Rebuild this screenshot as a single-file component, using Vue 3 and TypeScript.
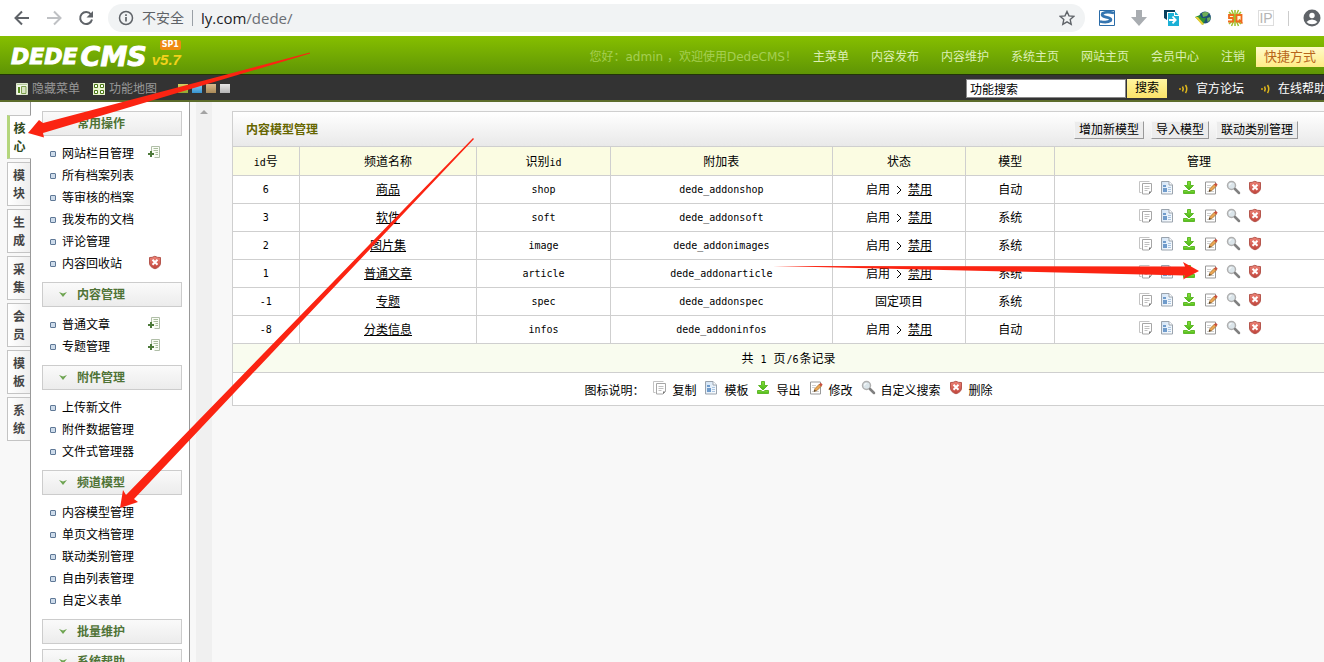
<script setup lang="ts">
import { ref } from 'vue'

type IconName = 'copy' | 'template' | 'export' | 'edit' | 'search' | 'delete'

interface Model {
  id: string
  name: string
  key: string
  table: string
  fixed: boolean
  kind: string
}

interface MenuItem {
  text: string
  extra?: 'add' | 'delete'
}

interface MenuGroup {
  title: string
  items: MenuItem[]
}

const keyword = ref('功能搜索')
const activeTab = ref('核心')

const topLinks = ['主菜单', '内容发布', '内容维护', '系统主页', '网站主页', '会员中心', '注销']
const helpLinks = ['官方论坛', '在线帮助']
const skins = ['green', 'blue', 'tan', 'grey']
const tabs = ['核心', '模块', '生成', '采集', '会员', '模板', '系统']

const groups: MenuGroup[] = [
  {
    title: '常用操作',
    items: [
      { text: '网站栏目管理', extra: 'add' },
      { text: '所有档案列表' },
      { text: '等审核的档案' },
      { text: '我发布的文档' },
      { text: '评论管理' },
      { text: '内容回收站', extra: 'delete' },
    ],
  },
  { title: '内容管理', items: [{ text: '普通文章', extra: 'add' }, { text: '专题管理', extra: 'add' }] },
  { title: '附件管理', items: [{ text: '上传新文件' }, { text: '附件数据管理' }, { text: '文件式管理器' }] },
  {
    title: '频道模型',
    items: [
      { text: '内容模型管理' },
      { text: '单页文档管理' },
      { text: '联动类别管理' },
      { text: '自由列表管理' },
      { text: '自定义表单' },
    ],
  },
  { title: '批量维护', items: [] },
  { title: '系统帮助', items: [] },
]

const toolButtons = ['增加新模型', '导入模型', '联动类别管理']

const models: Model[] = [
  { id: '6', name: '商品', key: 'shop', table: 'dede_addonshop', fixed: false, kind: '自动' },
  { id: '3', name: '软件', key: 'soft', table: 'dede_addonsoft', fixed: false, kind: '系统' },
  { id: '2', name: '图片集', key: 'image', table: 'dede_addonimages', fixed: false, kind: '系统' },
  { id: '1', name: '普通文章', key: 'article', table: 'dede_addonarticle', fixed: false, kind: '系统' },
  { id: '-1', name: '专题', key: 'spec', table: 'dede_addonspec', fixed: true, kind: '系统' },
  { id: '-8', name: '分类信息', key: 'infos', table: 'dede_addoninfos', fixed: false, kind: '自动' },
]

const actions: { icon: IconName; label: string }[] = [
  { icon: 'copy', label: '复制' },
  { icon: 'template', label: '模板' },
  { icon: 'export', label: '导出' },
  { icon: 'edit', label: '修改' },
  { icon: 'search', label: '自定义搜索' },
  { icon: 'delete', label: '删除' },
]
</script>

<template>
  <div class="window">
    <svg class="defs" width="0" height="0" aria-hidden="true">
      <defs>
        <linearGradient id="g-red" x1="0" y1="0" x2="0" y2="1">
          <stop offset="0" stop-color="#ee8478" /><stop offset="1" stop-color="#c0433a" />
        </linearGradient>
        <linearGradient id="g-green" x1="0" y1="0" x2="0" y2="1">
          <stop offset="0" stop-color="#86e238" /><stop offset="1" stop-color="#46b416" />
        </linearGradient>
        <linearGradient id="g-doc" x1="0" y1="0" x2="1" y2="1">
          <stop offset="0" stop-color="#cfe2f5" /><stop offset="1" stop-color="#ffffff" />
        </linearGradient>
      </defs>
      <symbol id="i-copy" viewBox="0 0 16 16">
        <path d="M1.500 12.500V1.500h10M1.500 12.500h2" fill="none" stroke="#c4c4c4" />
        <path d="M4.500 3.500h9v8l-2.500 2.500H4.500z" fill="#fff" stroke="#a6a6a6" />
        <path d="M6.500 6.500h5M6.500 8.500h5M6.500 10.500h3" stroke="#c0c0c0" fill="none" />
        <path d="M11 14v-2.500h2.500z" fill="#777" />
      </symbol>
      <symbol id="i-template" viewBox="0 0 16 16">
        <path d="M1.500 1.500h7.500l3.500 3.500v9h-11z" fill="url(#g-doc)" stroke="#9aa3ad" />
        <path d="M9 1.500V5h3.500" fill="#fff" stroke="#9aa3ad" />
        <path d="M3 5h3v2H3zM3 8h4v4H3z" fill="#6f9bcb" />
        <path d="M8 7.500h3M8 9.500h3M8 11.500h3" stroke="#a9c4e0" />
      </symbol>
      <symbol id="i-export" viewBox="0 0 16 16">
        <path d="M5.500 1.500h3v4h3L7 10 2.500 5.500h3z" fill="url(#g-green)" stroke="#5fb82a" />
        <path d="M1.500 10.500h3.500l2 1.500 2-1.500h3.500v3h-11z" fill="url(#g-green)" stroke="#5fb82a" />
      </symbol>
      <symbol id="i-edit" viewBox="0 0 16 16">
        <path d="M1.500 2h10v12h-10z" fill="#fff" stroke="#999" />
        <path d="M3 5.500h4M3 7.500h3M3 11.500h7" stroke="#cfcfcf" />
        <path d="M5 11.500l1-3L10.500 4l2 2L8 10.500z" fill="#eba552" stroke="#9a6a2c" stroke-width=".7" />
        <path d="M10 4.500L11.800 2.800l1.900 1.900L12 6.500z" fill="#c8503e" />
        <path d="M5 11.500l.6-1.800 1.200 1.200z" fill="#222" />
      </symbol>
      <symbol id="i-search" viewBox="0 0 16 16">
        <circle cx="5.500" cy="5.500" r="4" fill="#dbe5ea" stroke="#b0b0b0" stroke-width="1.500" />
        <path d="M3.500 5.500a2 2 0 0 1 2-2" stroke="#fff" fill="none" />
        <path d="M9 9l4 4" stroke="#808080" stroke-width="2.500" stroke-linecap="round" />
      </symbol>
      <symbol id="i-delete" viewBox="0 0 16 16">
        <path d="M1.500 2.500Q4 2.800 6.800 1.300 9.500 2.800 12.500 2.500v5.500q0 4-5.500 5.800Q1.500 12 1.500 8z" fill="url(#g-red)" stroke="#b5564d" />
        <path d="M4.500 4.800l5 5M9.500 4.800l-5 5" stroke="#fff" stroke-width="2" />
      </symbol>
      <symbol id="i-add" viewBox="0 0 16 16">
        <path d="M3.500 6V1.500h8v11h-5" fill="#fafdf6" stroke="#b0bea8" />
        <path d="M5.500 3.500h4.500M5.500 5.500h4.500M7.500 7.500h2.500M7.500 9.500h2.500" stroke="#a8bc9b" />
        <path d="M0 9h6M3 6v6" stroke="#4d7a3a" stroke-width="2" />
      </symbol>
      <symbol id="i-sound" viewBox="0 0 10 10">
        <path d="M0 4h2v2H0z" fill="#b08a12" />
        <path d="M3.500 2.500q1.500 2.500 0 5M6.500 1q2.500 4 0 8" fill="none" stroke="#e0b81c" stroke-width="1.500" />
      </symbol>
    </svg>

    <div class="browser">
      <div class="nav-buttons">
        <button type="button" aria-label="后退">
          <svg width="16" height="16" viewBox="0 0 16 16"><path d="M15 8H2M8 1.500L1.500 8 8 14.500" fill="none" stroke="#5f6368" stroke-width="2" /></svg>
        </button>
        <button type="button" aria-label="前进">
          <svg width="16" height="16" viewBox="0 0 16 16"><path d="M1 8h13M8 1.500L14.500 8 8 14.500" fill="none" stroke="#bfc1c4" stroke-width="2" /></svg>
        </button>
        <button type="button" aria-label="刷新">
          <svg width="16" height="16" viewBox="0 0 16 16"><path d="M13 4.500A6 6 0 1 0 14 9.500" fill="none" stroke="#5f6368" stroke-width="2" /><path d="M15 1v6.500H8.500z" fill="#5f6368" /></svg>
        </button>
      </div>
      <div class="omnibox">
        <svg width="16" height="16" viewBox="0 0 16 16"><circle cx="8" cy="8" r="6.500" fill="none" stroke="#5f6368" stroke-width="1.500" /><path d="M8 7v4.500M8 4.300v1.700" stroke="#5f6368" stroke-width="1.700" /></svg>
        <span class="insecure">不安全</span>
        <span class="url">ly.com<span class="path">/dede/</span></span>
        <svg class="star" width="16" height="16" viewBox="0 0 16 16"><path d="M8 1.500l2 4.400 4.700.5-3.500 3.200 1 4.700L8 11.900l-4.200 2.400 1-4.700L1.300 6.400 6 5.900z" fill="none" stroke="#5f6368" stroke-width="1.400" /></svg>
      </div>
      <div class="extensions">
        <svg width="18" height="18" viewBox="0 0 18 18"><path d="M1.500 1.500h15v15h-15z" fill="#fff" stroke="#2b6ca8" /><path d="M16 4Q8 2 4.500 4.500 3 7.200 8 8.200q6 1.300 4.500 3.500-3 2.300-10.500.8" fill="none" stroke="#3575b0" stroke-width="2.800" /></svg>
        <svg width="18" height="18" viewBox="0 0 18 18"><path d="M6 1h6v7h5l-8 9-8-9h5z" fill="#a9adb1" /></svg>
        <svg width="18" height="18" viewBox="0 0 18 18"><path d="M2 1h11v2H5v8L2 9z" fill="#083f5c" /><path d="M6 4h6v3h5v10H6z" fill="#1cb0d6" /><path d="M13 2.500L16.500 6H13z" fill="#1cb0d6" /><path d="M7 11h6M10.500 7.500l3.200 3.500-3.200 3.300" fill="none" stroke="#fff" stroke-width="1.800" /></svg>
        <svg width="18" height="18" viewBox="0 0 18 18"><circle cx="11" cy="8.500" r="6" fill="#1d4f78" /><path d="M8 4q4-2 7 0l-2 3-4 1zM13 9l3.500-1q0 4-3 5z" fill="#6fae57" /><path d="M1 8l5-2 2 3 4 0-3 7z" fill="#2f8f35" /><path d="M1 8l3 0 6 7-2 1z" fill="#e6cf35" /></svg>
        <svg width="18" height="18" viewBox="0 0 18 18"><path d="M9 1v16M3 3l12 12M15 3L3 15M5.500 1l7 16M12.500 1l-7 16" stroke="#9cc02a" stroke-width="1.500" /><path d="M8 6H3v3h4v3.500H2M15.500 6h-5v6.500h5zM13 10.500l3.500 4" fill="#fff6d8" stroke="#ef6b1c" stroke-width="1.800" /></svg>
        <span class="ip">IP</span>
        <span class="divider"></span>
        <svg width="18" height="18" viewBox="0 0 18 18"><circle cx="9" cy="9" r="8.500" fill="#5f6368" /><circle cx="9" cy="6.500" r="2.700" fill="#fff" /><path d="M3.500 13q2-2.500 5.500-2.500t5.500 2.500q-2 2.300-5.500 2.300T3.500 13z" fill="#fff" /></svg>
      </div>
    </div>

    <header class="header">
      <div class="logo">
        <span class="dede">DEDE</span><span class="cms">CMS</span>
        <span class="release"><span class="sp">SP1</span><span class="version">v5.7</span></span>
      </div>
      <div class="account">
        <span class="welcome">您好：admin ，欢迎使用DedeCMS！</span>
        <nav class="top-nav">
          <a v-for="link in topLinks" :key="link" href="#">{{ link }}</a>
        </nav>
        <button type="button" class="shortcut">快捷方式</button>
      </div>
    </header>

    <div class="toolbar">
      <div class="tools">
        <a href="#">
          <svg width="12" height="12" viewBox="0 0 12 12"><path d="M.5.5h11v11H.5z" fill="#f2f7e8" stroke="#dfe8cf" /><path d="M1 1.500h10" stroke="#b8cda0" /><path d="M2 4h2v6H2z" fill="#5c8d24" /><path d="M5.500 3.500h4.500v7H5.500z" fill="#d8e4c4" stroke="#7ea04f" /></svg>
          隐藏菜单
        </a>
        <a href="#">
          <svg width="12" height="12" viewBox="0 0 12 12"><path d="M0 0h12v12H0z" fill="#e8f2cc" /><path d="M1.500 1.500h3v3h-3zM7.500 1.500h3v3h-3zM1.500 7.500h3v3h-3zM7.500 7.500h3v3h-3z" fill="#fff" stroke="#4c7818" /></svg>
          功能地图
        </a>
        <div class="skins">
          <button v-for="skin in skins" :key="skin" type="button" :class="skin" :aria-label="skin"></button>
        </div>
      </div>
      <form class="search" @submit.prevent>
        <input v-model="keyword" type="text" aria-label="功能搜索" />
        <button type="submit">搜索</button>
      </form>
      <div class="help">
        <a v-for="link in helpLinks" :key="link" href="#">
          <svg width="10" height="10"><use href="#i-sound" /></svg>{{ link }}
        </a>
      </div>
    </div>

    <div class="body">
      <nav class="tabs">
        <button v-for="tab in tabs" :key="tab" type="button" :class="{ active: tab === activeTab }" @click="activeTab = tab">
          {{ tab }}
        </button>
      </nav>

      <aside class="menu">
        <section v-for="group in groups" :key="group.title">
          <h2>
            <svg width="8" height="5" viewBox="0 0 8 5"><path d="M0 0l4 1.500L8 0 4 5z" fill="#6fa552" /></svg>
            {{ group.title }}
          </h2>
          <ul v-if="group.items.length">
            <li v-for="item in group.items" :key="item.text">
              <span class="bullet"></span>
              <a href="#">{{ item.text }}</a>
              <a v-if="item.extra" class="extra" href="#" :aria-label="item.extra">
                <svg width="16" height="16"><use :href="'#i-' + item.extra" /></svg>
              </a>
            </li>
          </ul>
        </section>
      </aside>

      <div class="scroller">
        <svg width="8" height="4" viewBox="0 0 8 4"><path d="M4 0l4 4H0z" fill="#a3a3a3" /></svg>
      </div>

      <main class="main">
        <div class="card">
          <div class="card-title">
            <h1>内容模型管理</h1>
            <div class="card-buttons">
              <button v-for="b in toolButtons" :key="b" type="button">{{ b }}</button>
            </div>
          </div>
          <table>
            <colgroup>
              <col class="c-id" /><col class="c-name" /><col class="c-key" /><col class="c-table" />
              <col class="c-state" /><col class="c-kind" /><col class="c-act" />
            </colgroup>
            <thead>
              <tr>
                <th><span class="mono">id</span>号</th>
                <th>频道名称</th>
                <th>识别<span class="mono">id</span></th>
                <th>附加表</th>
                <th>状态</th>
                <th>模型</th>
                <th>管理</th>
              </tr>
            </thead>
            <tbody>
              <tr v-for="m in models" :key="m.id">
                <td class="mono">{{ m.id }}</td>
                <td><a href="#">{{ m.name }}</a></td>
                <td class="mono">{{ m.key }}</td>
                <td class="mono">{{ m.table }}</td>
                <td>
                  <template v-if="m.fixed">固定项目</template>
                  <span v-else class="state">
                    启用
                    <svg width="6" height="10" viewBox="0 0 6 10"><path d="M1 1l4 4-4 4" fill="none" stroke="#000" /></svg>
                    <a href="#">禁用</a>
                  </span>
                </td>
                <td>{{ m.kind }}</td>
                <td>
                  <div class="actions">
                    <a v-for="a in actions" :key="a.icon" href="#" :aria-label="a.label">
                      <svg width="16" height="16"><use :href="'#i-' + a.icon" /></svg>
                    </a>
                  </div>
                </td>
              </tr>
            </tbody>
          </table>
          <div class="pager">共<span class="mono">&nbsp;1&nbsp;</span>页<span class="mono">/6</span>条记录</div>
          <div class="legend">
            <span>图标说明：</span>
            <span v-for="a in actions" :key="a.icon" class="legend-item">
              <svg width="16" height="16"><use :href="'#i-' + a.icon" /></svg>{{ a.label }}
            </span>
          </div>
        </div>
      </main>
    </div>

    <svg class="arrows" width="1324" height="662" viewBox="0 0 1324 662" aria-hidden="true">
      <g fill="#fb2412">
        <path d="M310 52.500L43 123 39 120 28 133 44 137.500 43 133 310 53.500z" />
        <path d="M473 138L126 495 123 490 120 508 138 502 134 499 474 139z" />
        <path d="M773 266L1185 266.500 1183 262 1199 271 1183 279.500 1185 275.500z" />
      </g>
    </svg>
  </div>
</template>

<style>
body {
  margin: 0;
  overflow: hidden;
}
</style>

<style scoped>
.window {
  position: relative;
  display: flex;
  flex-direction: column;
  height: 100vh;
  overflow: hidden;
  background: #f8f8f8;
  color: #000;
  font: 12px/18px "Liberation Sans", "Noto Sans CJK SC", sans-serif;
}
.defs {
  position: absolute;
}
svg {
  display: block;
  flex: none;
}
a {
  color: inherit;
  text-decoration: none;
}
button {
  margin: 0;
  padding: 0;
  border: 0;
  background: none;
  font: inherit;
  color: inherit;
  cursor: pointer;
}

/* browser chrome */
.browser {
  display: flex;
  align-items: center;
  height: 36px;
  background: #fff;
}
.nav-buttons {
  display: flex;
  gap: 16px;
  padding: 0 14px;
}
.omnibox {
  display: flex;
  flex: 1;
  align-items: center;
  height: 28px;
  padding: 0 10px;
  border-radius: 14px;
  background: #f1f3f4;
  color: #5f6368;
  font-size: 14px;
}
.insecure {
  margin: 0 8px;
}
.url {
  padding-left: 8px;
  border-left: 1px solid #9aa0a6;
  color: #202124;
  font: 15px/16px "Open Sans", sans-serif;
}
.path {
  color: #6b6f74;
}
.star {
  margin-left: auto;
}
.extensions {
  display: flex;
  align-items: center;
  gap: 14px;
  padding: 0 3px 0 13px;
}
.ip {
  width: 14px;
  border: 1px solid #ddd;
  color: #b5b5b5;
  font-size: 14px;
  line-height: 14px;
  text-align: center;
}
.divider {
  width: 1px;
  height: 15px;
  background: #ccc;
}

/* green header */
.header {
  display: flex;
  align-items: center;
  justify-content: space-between;
  box-sizing: border-box;
  height: 38px;
  padding-top: 3px;
  background: linear-gradient(#86bf00, #5f9505);
}
.logo {
  display: flex;
  align-items: center;
  padding-left: 11px;
  color: #fff;
  font: italic bold 22px/28px "DejaVu Sans", sans-serif;
  -webkit-text-stroke: 1px #fff;
}
.cms {
  margin-left: 3px;
  font-size: 27px;
}
.release {
  display: flex;
  flex-direction: column;
  margin: 0 0 4px 5px;
  -webkit-text-stroke: 0;
}
.sp {
  align-self: flex-end;
  padding: 0 2px;
  border-radius: 2px;
  background: #ef8a12;
  color: #fff;
  font: bold 8px/10px "DejaVu Sans", sans-serif;
}
.version {
  color: #f2d21c;
  font: italic bold 15px/20px "Liberation Sans", sans-serif;
}
.account {
  display: flex;
  align-items: center;
  margin-right: -16px;
  font-family: "DejaVu Sans", "Noto Sans CJK SC", sans-serif;
}
.welcome {
  color: #a5cf52;
}
.top-nav {
  display: flex;
  gap: 22px;
  margin: 0 11px 0 16px;
  color: #dcefb4;
}
.shortcut {
  width: 84px;
  height: 20px;
  padding-left: 8px;
  background: linear-gradient(#fffbc8, #ffec86);
  color: #b8661a;
  font-size: 13px;
  line-height: 20px;
  text-align: left;
}

/* dark toolbar */
.toolbar {
  display: flex;
  align-items: center;
  height: 25px;
  border-top: 1px solid #223508;
  border-bottom: 2px solid #5b6b2a;
  background: #333;
}
.tools {
  display: flex;
  flex: 1;
  align-items: center;
  gap: 13px;
  padding-left: 16px;
  color: #989898;
}
.tools > a {
  display: flex;
  align-items: center;
  gap: 4px;
  padding-top: 2px;
}
.skins {
  display: flex;
  gap: 4px;
  padding: 2px 0 0 8px;
}
.skins button {
  width: 10px;
  height: 9px;
}
.green {
  background: linear-gradient(#d8cf62, #8ca832);
}
.blue {
  background: linear-gradient(#8fd0f4, #3593cf);
}
.tan {
  background: linear-gradient(#d8b88c, #a98a58);
}
.grey {
  background: linear-gradient(#e8e8e8, #b4b4b4);
}
.search {
  display: flex;
  padding-top: 1px;
}
.search input {
  box-sizing: border-box;
  width: 160px;
  height: 19px;
  padding: 0 3px;
  border: 1px solid #888;
  background: #fff;
  color: #000;
  font: inherit;
}
.search button {
  width: 40px;
  height: 19px;
  margin-left: 1px;
  background: linear-gradient(#fff5a0, #fbe36a);
}
.help {
  display: flex;
  gap: 17px;
  margin: 0 -2px 0 12px;
  color: #fff;
}
.help a {
  display: flex;
  align-items: center;
  gap: 7px;
  padding-top: 2px;
}

/* body */
.body {
  display: flex;
  flex: 1;
  min-height: 0;
}
.tabs {
  display: flex;
  flex-direction: column;
  gap: 3px;
  width: 23px;
  padding: 13px 0 0 7px;
}
.tabs button {
  box-sizing: border-box;
  height: 44px;
  padding: 4px 5px 2px;
  border: 1px solid #c4c4c4;
  border-right: 0;
  background: linear-gradient(90deg, #fff, #eee);
  color: #444;
  font-weight: bold;
}
.tabs .active {
  border-left: 3px solid #b4d67c;
  margin-right: -1px;
  padding-left: 3px;
  background: #fff;
  color: #2f4a1c;
  position: relative;
}
.menu {
  width: 140px;
  padding: 9px 7px 0 11px;
  border: 1px solid #999;
  border-width: 0 1px;
  background: #fff;
  overflow: hidden;
}
.menu h2 {
  display: flex;
  align-items: center;
  gap: 10px;
  box-sizing: border-box;
  height: 25px;
  margin: 0 0 5px;
  padding-left: 16px;
  border: 1px solid #ccc;
  background: linear-gradient(#fafafa, #ececec);
  color: #4f7336;
  font-size: 12px;
}
.menu ul {
  margin: 0;
  padding: 2px 0 7px;
  list-style: none;
}
.menu li {
  display: flex;
  align-items: center;
  position: relative;
  height: 22px;
  padding-left: 8px;
}
.bullet {
  box-sizing: border-box;
  width: 6px;
  height: 6px;
  margin-right: 6px;
  border: 1px solid #5f7896;
  border-radius: 1px;
  background: #cddbea;
}
.extra {
  position: absolute;
  left: 106px;
  top: 2px;
}
.scroller {
  width: 16px;
  margin-left: 6px;
  padding-top: 8px;
  background: #f0f0f0;
}
.scroller svg {
  margin: 0 auto;
}

/* model list */
.main {
  flex: 1;
  min-width: 0;
  padding: 9px 0 0 20px;
}
.card {
  margin-right: -21px;
  border: 1px solid #cfcfcf;
  border-bottom: 0;
  background: #fff;
}
.card-title {
  display: flex;
  align-items: center;
  justify-content: space-between;
  height: 34px;
  padding: 1px 46px 0 13px;
  box-sizing: border-box;
  height: 35px;
  border-bottom: 1px solid #cfcfcf;
  background: linear-gradient(#fff, #e9e9e9);
}
h1 {
  margin: 0;
  color: #666600;
  font-size: 12px;
}
.card-buttons {
  display: flex;
  gap: 7px;
}
.card-buttons button {
  height: 18px;
  padding: 0 4px;
  border: 1px solid #f6f6f6;
  border-right-color: #999;
  border-bottom-color: #999;
  background: #ececec;
  line-height: 16px;
}
table {
  width: 100%;
  table-layout: fixed;
  border-spacing: 0;
  text-align: center;
}
.c-id { width: 6%; }
.c-name { width: 16%; }
.c-key { width: 12%; }
.c-table { width: 20%; }
.c-state { width: 12%; }
.c-kind { width: 8%; }
.c-act { width: 26%; }
th,
td {
  box-sizing: border-box;
  height: 28px;
  padding: 0;
  border: 1px solid #cfcfcf;
  border-width: 0 1px 1px 0;
  font-weight: normal;
}
th {
  height: 29px;
  padding-top: 2px;
  background: #fbfce2;
}
.mono {
  font-family: "DejaVu Sans Mono", monospace;
  font-size: 10px;
}
td a,
.state a {
  text-decoration: underline;
}
.state {
  display: flex;
  align-items: center;
  justify-content: center;
  gap: 6px;
}
td .actions {
  display: flex;
  justify-content: center;
  gap: 6px;
  padding: 0 0 3px 4px;
}
.pager {
  box-sizing: border-box;
  height: 29px;
  padding-top: 1px;
  border-bottom: 1px solid #cfcfcf;
  background: #f9fcef;
  line-height: 28px;
  text-align: center;
}
.pager .mono {
  padding: 0 1px;
}
.legend {
  display: flex;
  align-items: center;
  justify-content: center;
  gap: 8px;
  height: 32px;
  border-bottom: 1px solid #cfcfcf;
}
.legend > span {
  padding-top: 3px;
}
.legend-item {
  display: flex;
  align-items: center;
  gap: 4px;
}
.legend-item svg {
  margin-bottom: 6px;
}
.arrows {
  position: absolute;
  left: 0;
  top: 0;
  pointer-events: none;
}
</style>
